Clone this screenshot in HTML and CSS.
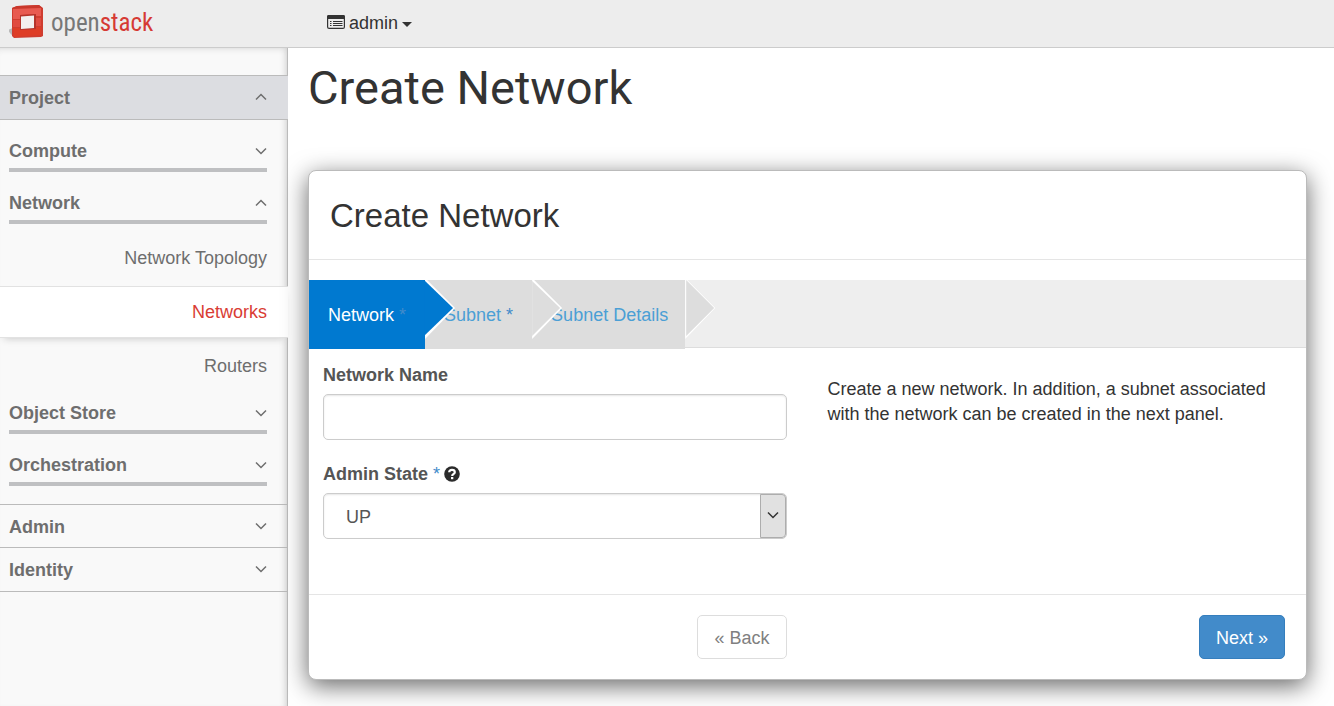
FILE: index.html
```html
<!DOCTYPE html>
<html lang="en">
<head>
<meta charset="utf-8">
<title>Create Network - OpenStack Dashboard</title>
<link rel="stylesheet" href="styles.css">
</head>
<body>
<header class="topbar">
  <a class="brand" href="#" aria-label="openstack">
    <svg class="brand-mark" width="36" height="34" viewBox="0 0 36 34" aria-hidden="true">
      <path d="M-1 25L4 23V31Q1 29 -1 25Z" fill="#b9b9b9"/>
      <path d="M3 3L8 1L30 0L34 3V31L32 32L5 33L3 31Z" fill="#cf3d30"/>
      <path d="M3 3L8 1L30 0L33 3L4 4Z" fill="#c9382c"/>
      <path d="M4 4L32 3V11H26V9L12 10V14H4Z" fill="#e85a50"/>
      <path d="M4 15H11V22H4ZM27 13H32V21H27Z" fill="#e04b40"/>
      <path d="M4 23H11V25L26 24V22H32V30L5 32Z" fill="#de3d26"/>
      <path d="M11 10L27 9V24L11 25Z" fill="#b5332a"/>
      <path d="M12 11.500L25 10.500V23L12 24Z" fill="#f3efee"/>
    </svg>
    <span class="brand-name">open<span class="brand-accent">stack</span></span>
  </a>
  <button class="project-menu" type="button">
    <svg width="18" height="16" viewBox="0 0 18 16" aria-hidden="true">
      <rect x=".6" y=".6" width="16.8" height="12.8" rx="1.5" fill="none" stroke="#333" stroke-width="1.2"/>
      <path d="M0 1.500Q0 0 1.500 0h15Q18 0 18 1.500V4H0Z" fill="#333"/>
      <path d="M3 6.500h1.500M3 8.500h1.500M3 10.500h1.500M6 6.500h9.500M6 8.500h9.500M6 10.500h9.500" stroke="#333"/>
    </svg>
    <span>admin</span>
    <span class="caret"></span>
  </button>
</header>
<div class="layout">
  <nav class="sidebar" aria-label="Dashboard">
    <a class="panel-link open" href="#">Project<svg class="chev" viewBox="0 0 12 8"><path d="M1 6.500L6 1.500L11 6.500"/></svg></a>
    <div class="panel-body">
      <a class="group" href="#">Compute<svg class="chev" viewBox="0 0 12 8"><path d="M1 1.500L6 6.500L11 1.500"/></svg></a>
      <a class="group" href="#">Network<svg class="chev" viewBox="0 0 12 8"><path d="M1 6.500L6 1.500L11 6.500"/></svg></a>
      <ul class="links">
        <li><a href="#">Network Topology</a></li>
        <li class="active"><a href="#" aria-current="page">Networks</a></li>
        <li><a href="#">Routers</a></li>
      </ul>
      <a class="group" href="#">Object Store<svg class="chev" viewBox="0 0 12 8"><path d="M1 1.500L6 6.500L11 1.500"/></svg></a>
      <a class="group" href="#">Orchestration<svg class="chev" viewBox="0 0 12 8"><path d="M1 1.500L6 6.500L11 1.500"/></svg></a>
    </div>
    <a class="panel-link" href="#">Admin<svg class="chev" viewBox="0 0 12 8"><path d="M1 1.500L6 6.500L11 1.500"/></svg></a>
    <a class="panel-link" href="#">Identity<svg class="chev" viewBox="0 0 12 8"><path d="M1 1.500L6 6.500L11 1.500"/></svg></a>
  </nav>
  <main class="content">
    <h1>Create Network</h1>
    <form class="card">
      <h2>Create Network</h2>
      <ol class="steps">
        <li class="current"><a href="#">Network <span class="req">*</span></a></li>
        <li><a href="#">Subnet <span class="req">*</span></a></li>
        <li><a href="#">Subnet Details</a></li>
      </ol>
      <div class="columns">
        <div class="fields">
          <div class="label-row"><label for="net-name">Network Name</label></div>
          <input class="control" id="net-name" type="text">
          <div class="label-row">
            <label for="admin-state">Admin State <span class="req">*</span></label>
            <svg width="16" height="16" viewBox="0 0 16 16" aria-hidden="true">
              <circle cx="8" cy="8" r="7.800" fill="#2b2b2b"/>
              <path d="M5.200 6.300Q5.200 3.900 8 3.900T10.800 6.200Q10.800 7.300 9.500 8Q8.200 8.600 8.200 9.900" fill="none" stroke="#fff" stroke-width="2.200"/>
              <rect x="7" y="11" width="2.300" height="2.200" fill="#fff"/>
            </svg>
          </div>
          <div class="select-wrap">
            <select class="control" id="admin-state"><option>UP</option><option>DOWN</option></select>
            <span class="select-arrow"><svg class="chev" viewBox="0 0 12 8"><path d="M1 1.500L6 6.500L11 1.500"/></svg></span>
          </div>
        </div>
        <p class="help">Create a new network. In addition, a subnet associated with the network can be created in the next panel.</p>
      </div>
      <div class="actions">
        <div><button class="btn" type="button" disabled>« Back</button></div>
        <div><button class="btn primary" type="button">Next »</button></div>
      </div>
    </form>
  </main>
</div>
</body>
</html>
```

FILE: styles.css
```css
* { box-sizing: border-box; }

body {
  margin: 0;
  min-height: 100vh;
  display: flex;
  flex-direction: column;
  background: #fff;
  color: #333;
  font: 18px/25px "Liberation Sans", Arial, sans-serif;
}

a { color: inherit; text-decoration: none; }
ul, ol { list-style: none; margin: 0; padding: 0; }
button, input, select { font: inherit; }

.topbar {
  display: flex;
  height: 48px;
  background: #ededed;
  border-bottom: 1px solid #ccc;
}
.brand {
  width: 327px;
  padding: 0 0 3px 9px;
  display: flex;
  align-items: center;
  gap: 6px;
}
.brand-name {
  font-family: "Roboto Condensed", "Liberation Sans", sans-serif;
  font-size: 25px;
  color: #777;
}
.brand-accent { color: #d63a34; }
.project-menu {
  display: flex;
  align-items: center;
  gap: 4px;
  padding: 0 0 1px;
  border: 0;
  background: none;
  color: #333;
}
.caret {
  border: 5px solid transparent;
  border-top-color: #333;
  border-bottom: 0;
  margin-top: 3px;
}

.layout { flex: 1; display: flex; }

.sidebar {
  width: 288px;
  flex: none;
  padding-top: 27px;
  background: #f9f9f9;
  border-right: 1px solid #bbb;
  box-shadow: inset -6px 0 6px -5px #ccc, inset 0 6px 6px -5px #ddd;
  color: #6e6e6e;
}
.chev {
  width: 12px;
  height: 8px;
  margin-bottom: 2px;
  fill: none;
  stroke: currentColor;
  stroke-width: 1.5;
}
.panel-link, .group {
  display: flex;
  align-items: center;
  justify-content: space-between;
  font-weight: bold;
}
.panel-link {
  height: 43px;
  padding: 2px 20px 0 9px;
  border-top: 1px solid #bbb;
}
.panel-link:last-child { height: 45px; padding-top: 1px; border-bottom: 1px solid #bbb; }
.panel-link.open {
  height: 45px;
  margin-right: -1px;
  padding: 1px 21px 0 9px;
  background: #dcdde1;
  border-bottom: 1px solid #bbb;
}
.panel-body { padding-bottom: 18px; }
.group {
  margin: 0 20px 0 9px;
  padding: 19px 0 4px;
  border-bottom: 4px solid #bfc0c2;
}
.links { padding-top: 8px; text-align: right; }
.links a { display: block; padding: 14px 20px 15px 9px; }
.links li:last-child a { padding: 16px 20px 3px 9px; }
.links .active {
  margin-right: -1px;
  background: #fff;
  border: solid #e2e2e2;
  border-width: 1px 0;
  box-shadow: 0 5px 7px -4px #ccc;
  color: #d93c34;
}
.links .active a { padding: 13px 21px 12px 9px; }

.content { flex: 1; min-width: 0; padding: 15px 27px 26px 20px; }
h1, h2 { margin: 0; font-weight: normal; }
h1 {
  font-family: Roboto, "Liberation Sans", sans-serif;
  font-size: 47px;
  line-height: 50px;
  margin-bottom: 57px;
}

.card {
  background: #fff;
  border: 1px solid #bbb;
  border-radius: 8px;
  box-shadow: 0 6px 24px rgba(0, 0, 0, 0.6);
}
h2 {
  font-size: 33px;
  line-height: 48px;
  padding: 21px 21px 19px;
  border-bottom: 1px solid #e5e5e5;
}
.steps {
  display: flex;
  height: 68px;
  margin-top: 20px;
  background: #eee;
  border-bottom: 1px solid #ddd;
}
.steps li {
  position: relative;
  height: 69px;
  background: #ddd;
  color: #4b9fd5;
}
.steps li:nth-child(1) { z-index: 3; }
.steps li:nth-child(2) { z-index: 2; }
.steps li:nth-child(3) { z-index: 1; }
.steps a { display: block; padding: 23px 19px 21px; }
.steps .current { background: #0079d0; color: #fff; }
.steps li::before,
.steps li::after {
  content: "";
  position: absolute;
  top: 0;
  left: 100%;
  clip-path: polygon(0 0, 100% 50%, 0 100%);
}
.steps li::before {
  width: 30px;
  height: 59px;
  background: #fff;
  clip-path: polygon(0 0, 2px 0, 100% 28px, 0 100%);
}
.steps li::after { width: 28px; height: 56px; background: #ddd; }
.steps .current::after { left: calc(100% - 1px); width: 29px; background: #0079d0; }
.steps li:nth-child(2)::after { clip-path: polygon(0 1px, 100% 50%, 0 100%); }
.steps li:last-child a { padding-right: 17px; }
.steps li:last-child::after { left: calc(100% + 1px); }
.req { color: #428bca; font-weight: normal; }

.columns { display: grid; grid-template-columns: 1fr 1fr; padding-bottom: 55px; }
.fields { padding: 15px 21px 0 14px; }
.label-row { display: flex; align-items: center; gap: 4px; margin-bottom: 6px; }
.label-row svg { margin-bottom: 1px; }
label { font-weight: bold; color: #555; }
.control {
  display: block;
  width: 100%;
  height: 46px;
  padding: 2px 22px 0;
  border: 1px solid #ccc;
  border-radius: 5px;
  background: #fff;
  color: #555;
  box-shadow: inset 0 1px 2px rgba(0, 0, 0, 0.1);
  appearance: none;
}
input.control { margin-bottom: 22px; }
.select-wrap { position: relative; }
.select-arrow {
  position: absolute;
  inset: 1px 1px 1px auto;
  width: 26px;
  display: flex;
  align-items: center;
  justify-content: center;
  background: #e1e1e1;
  border: 1px solid #adadad;
  border-radius: 0 4px 4px 0;
  pointer-events: none;
}
.help { margin: 0; padding: 29px 20px 0; }

.actions {
  display: grid;
  grid-template-columns: 1fr 1fr;
  padding: 20px 0;
  border-top: 1px solid #e5e5e5;
  text-align: right;
}
.actions div { padding-right: 21px; }
.btn {
  height: 44px;
  padding: 2px 16px 0;
  border: 1px solid #ddd;
  border-radius: 5px;
  background: #fff;
  color: #808080;
  vertical-align: top;
}
.btn.primary { background: #428bca; border-color: #357ebd; color: #fff; }
```
